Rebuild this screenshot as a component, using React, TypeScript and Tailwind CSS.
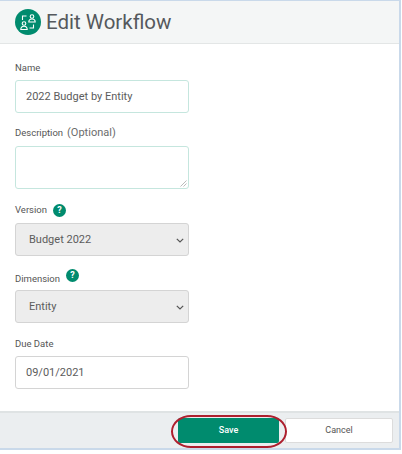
const font = { fontFamily: "Roboto, 'Liberation Sans', sans-serif" };

function Help() {
  return (
    <span className="flex h-[13px] w-[13px] items-center justify-center rounded-full bg-[#008b6e] text-[9px] leading-none font-bold text-white">?</span>
  );
}

function Chevron() {
  return (
    <svg width="8" height="5" viewBox="0 0 8 5" className="absolute top-[14px] right-[4px]" fill="none" stroke="#555" strokeWidth="1.2">
      <path d="M0.8 0.8 L4 4 L7.2 0.8" />
    </svg>
  );
}

function Select({ value }: { value: string }) {
  return (
    <div className="relative h-[33px] w-[174px] rounded-[3px] border border-[#d4d4d4] bg-[#ededed] pl-[13px] text-[11px] leading-[31px] text-[#5c5c5c]">
      {value}
      <Chevron />
    </div>
  );
}

export default function App() {
  return (
    <div style={font} className="h-[454px] w-[402px] bg-white">
      <div className="flex h-[450px] w-[401px] flex-col border-t border-r-2 border-b-2 border-[#c9d9ea]">
        <div className="flex h-[43px] items-center gap-[5px] border-b border-[#e3e6e6] bg-[#f4f6f6] pl-[15px]">
          <svg width="26" height="26" viewBox="0 0 26 26">
            <circle cx="13" cy="13" r="13" fill="#008b6e" />
            <g fill="none" stroke="#fff" strokeWidth="1.1">
              <circle cx="17" cy="7.5" r="1.8" />
              <path d="M13.8 13 C13.8 10.8 15 10 17 10 C19 10 20.2 10.8 20.2 13 Z" />
              <circle cx="9" cy="14.5" r="1.8" />
              <path d="M5.8 20.5 C5.8 18 7 17.2 9 17.2 C11 17.2 12.2 18 12.2 20.5 Z" />
              <path d="M11.5 7 H7.5 V11" />
              <path d="M14.5 19 H18.5 V15.5" />
            </g>
          </svg>
          <span className="text-[20.5px] leading-none font-normal text-[#55595d]">Edit Workflow</span>
        </div>

        <div className="flex flex-1 flex-col bg-white pt-[17px] pl-[15px]">
          <label className="h-[13px] text-[9.5px] leading-[13px] text-[#555]">Name</label>
          <input
            readOnly
            value="2022 Budget by Entity"
            style={font}
            className="mt-[6px] h-[33px] w-[174px] rounded-[3px] border border-[#c5e6de] bg-white pl-[10px] text-[11px] text-[#5c5c5c] outline-none"
          />

          <div className="mt-[12px] flex h-[16px] items-center gap-[4px] text-[9.5px] text-[#555]">
            Description <span className="text-[11px] text-[#6c6c6c]">(Optional)</span>
          </div>
          <div className="relative mt-[5px] w-[174px]">
            <textarea
              readOnly
              style={font}
              className="block h-[43px] w-[174px] resize-none rounded-[3px] border border-[#c5e6de] bg-white outline-none"
            />
            <svg width="7" height="7" viewBox="0 0 7 7" className="absolute right-[2px] bottom-[2px]" fill="none" stroke="#aaa" strokeWidth="0.8">
              <path d="M0.5 6.5 L6.5 0.5 M3.5 6.5 L6.5 3.5" />
            </svg>
          </div>

          <div className="mt-[14px] flex h-[15px] items-center gap-[6px] text-[9.5px] text-[#555]">
            Version
            <span className="-mt-[1px]"><Help /></span>
          </div>
          <div className="mt-[5px]"><Select value="Budget 2022" /></div>

          <div className="mt-[15px] flex h-[15px] items-start gap-[6px] text-[9.5px] leading-[15px] text-[#555]">
            Dimension
            <span className="-mt-[2px]"><Help /></span>
          </div>
          <div className="mt-[4px]"><Select value="Entity" /></div>

          <div className="mt-[14px] h-[13px] text-[9.5px] leading-[13px] text-[#555]">Due Date</div>
          <input
            readOnly
            value="09/01/2021"
            style={font}
            className="mt-[6px] h-[33px] w-[174px] rounded-[3px] border border-[#d4d4d4] bg-white pl-[10px] text-[11px] text-[#5c5c5c] outline-none"
          />
        </div>

        <div className="flex h-[37px] items-center justify-end gap-[6px] border-t-2 border-[#dfe3e4] bg-[#ebeef0] pr-[6px]">
          <div className="relative">
            <button className="block h-[25px] w-[101px] rounded-[2px] bg-[#008b6e] text-[9px] font-medium text-white">Save</button>
            <div className="absolute -top-[3px] -left-[7px] h-[33px] w-[116px] rounded-[20px/16.5px] border-[2.5px] border-[#ad1f2e]" />
          </div>
          <button className="h-[25px] w-[108px] rounded-[2px] border border-[#dcdcdc] bg-white text-[9px] text-[#555]">Cancel</button>
        </div>
      </div>
    </div>
  );
}
